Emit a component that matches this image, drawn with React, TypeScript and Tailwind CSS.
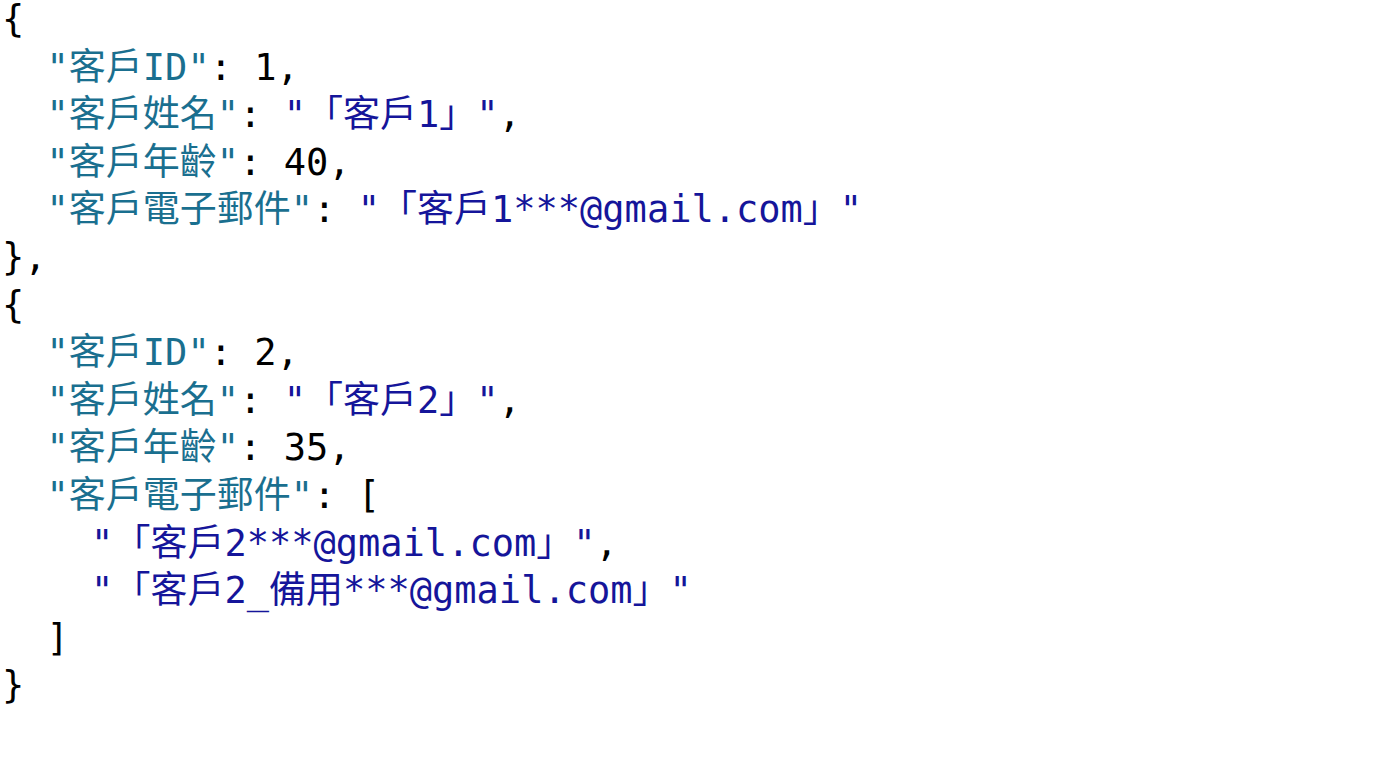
import React from 'react';

type Tok = { t: string; c?: 'k' | 's' | 'p' };

const color = {
  k: 'text-[#1a6f8f]',
  s: 'text-[#15159a]',
  p: 'text-black',
};

const lines: Tok[][] = [
  [{ t: '{' }],
  [{ t: '  ' }, { t: '"客戶ID"', c: 'k' }, { t: ': 1,' }],
  [{ t: '  ' }, { t: '"客戶姓名"', c: 'k' }, { t: ': ' }, { t: '"「客戶1」"', c: 's' }, { t: ',' }],
  [{ t: '  ' }, { t: '"客戶年齡"', c: 'k' }, { t: ': 40,' }],
  [{ t: '  ' }, { t: '"客戶電子郵件"', c: 'k' }, { t: ': ' }, { t: '"「客戶1***@gmail.com」"', c: 's' }],
  [{ t: '},' }],
  [{ t: '{' }],
  [{ t: '  ' }, { t: '"客戶ID"', c: 'k' }, { t: ': 2,' }],
  [{ t: '  ' }, { t: '"客戶姓名"', c: 'k' }, { t: ': ' }, { t: '"「客戶2」"', c: 's' }, { t: ',' }],
  [{ t: '  ' }, { t: '"客戶年齡"', c: 'k' }, { t: ': 35,' }],
  [{ t: '  ' }, { t: '"客戶電子郵件"', c: 'k' }, { t: ': [' }],
  [{ t: '    ' }, { t: '"「客戶2***@gmail.com」"', c: 's' }, { t: ',' }],
  [{ t: '    ' }, { t: '"「客戶2_備用***@gmail.com」"', c: 's' }],
  [{ t: '  ]' }],
  [{ t: '}' }],
];

const App: React.FC = () => {
  return (
    <div className="w-[1376px] h-[768px] bg-white overflow-hidden">
      <pre className="m-0 -mt-[4px] pl-[2px] text-[37px] leading-[47.6px] font-['DejaVu_Sans_Mono','Noto_Sans_CJK_TC',monospace] text-black">
        {lines.map((line, i) => (
          <div key={i} className="whitespace-pre">
            {line.map((tok, j) => (
              <span key={j} className={color[tok.c ?? 'p']}>
                {tok.t}
              </span>
            ))}
          </div>
        ))}
      </pre>
    </div>
  );
};

export default App;
